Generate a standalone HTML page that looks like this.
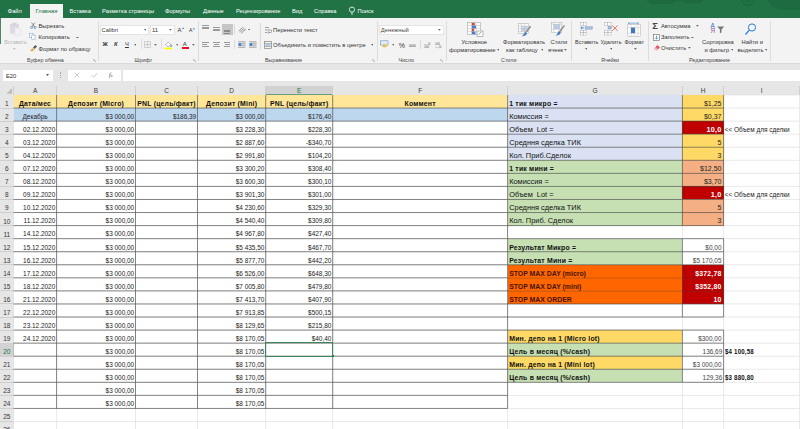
<!DOCTYPE html><html lang="ru"><head><meta charset="utf-8"><title>Excel</title><style>
*{margin:0;padding:0;box-sizing:border-box}
html,body{width:800px;height:429px;overflow:hidden;background:#fff}
body{position:relative;font-family:"Liberation Sans","DejaVu Sans",sans-serif;color:#222}
.a{position:absolute}
.t{position:absolute;white-space:pre;line-height:1;}
.cell{position:absolute;overflow:visible}
.ct{position:absolute;top:0;white-space:pre;line-height:1;}
.b{font-weight:bold}
.ct.b{letter-spacing:0.2px}
.rt{font-size:5.8px;color:#333;margin-top:0.5px;position:absolute;white-space:pre;line-height:1}
.tab{position:absolute;top:8.5px;font-size:5.75px;color:#fff;white-space:pre;line-height:1}
.gl{position:absolute;top:58.1px;font-size:5.4px;color:#444;white-space:pre;line-height:1}
.sep{position:absolute;top:21px;height:40px;width:1px;background:#dcdcdc}
.rh{position:absolute;left:0;width:13.5px;font-size:6.5px;color:#363636;text-align:center;line-height:1}
.ch{position:absolute;top:88.1px;font-size:6.5px;color:#3c3c3c;text-align:center;line-height:1}
</style></head><body>
<div class="a" style="left:0;top:0;width:800px;height:18px;background:#217346"></div>
<svg class="a" style="left:640px;top:0" width="160" height="18" viewBox="0 0 160 18"><g fill="#1d6a40"><path d="M6 0h58l-4 3.5h-14l-3 -2h-8l-2 2.5h-22z"/><path d="M128 0h32v9.5h-18a14 14 0 0 1 -14 -9.5z"/></g><g fill="none" stroke="#1d6a40" stroke-width="1.6"><circle cx="108" cy="-1" r="6.5"/><circle cx="108" cy="-1" r="2.6"/></g></svg>
<div class="a" style="left:30.2px;top:3.8px;width:32.8px;height:14.4px;background:#f3f3f3"></div>
<div class="tab" style="left:7.8px;color:#fff">Файл</div>
<div class="tab" style="left:35.5px;color:#217346">Главная</div>
<div class="tab" style="left:69.5px;color:#fff">Вставка</div>
<div class="tab" style="left:102px;color:#fff">Разметка страницы</div>
<div class="tab" style="left:165px;color:#fff">Формулы</div>
<div class="tab" style="left:203px;color:#fff">Данные</div>
<div class="tab" style="left:236px;color:#fff">Рецензирование</div>
<div class="tab" style="left:292px;color:#fff">Вид</div>
<div class="tab" style="left:314px;color:#fff">Справка</div>
<div class="tab" style="left:357.5px;color:#fff">Поиск</div>
<svg class="a" style="left:348px;top:6px" width="8" height="10" viewBox="0 0 8 10"><circle cx="4" cy="3.6" r="2.6" fill="none" stroke="#fff" stroke-width="0.8"/><path d="M3 7h2M3.2 8.2h1.6" stroke="#fff" stroke-width="0.7"/></svg>
<div class="a" style="left:0;top:18px;width:800px;height:46px;background:#f3f3f3"></div>
<div class="a" style="left:0;top:63px;width:800px;height:1px;background:#dadada"></div>
<div class="a" style="left:0;top:64px;width:800px;height:31px;background:#e6e6e6"></div>
<div class="a" style="left:2.6px;top:69.6px;width:50px;height:11px;background:#fff"></div>
<div class="t" style="left:6px;top:74.1px;font-size:5.8px;color:#333">E20</div>
<svg class="a" style="left:46px;top:74px" width="3" height="1.9" viewBox="0 0 30 19"><path d="M0 0h30L15 19z" fill="#555"/></svg>
<div class="a" style="left:59.6px;top:71.5px;width:1px;height:6px;border-left:1px dotted #aaa"></div>
<div class="a" style="left:67.6px;top:69.6px;width:53.4px;height:11px;background:#fff"></div>
<svg class="a" style="left:74px;top:72px" width="6" height="6" viewBox="0 0 6 6"><path d="M0.6 0.6L5.4 5.4M5.4 0.6L0.6 5.4" stroke="#b4b4b4" stroke-width="0.7" fill="none"/></svg>
<svg class="a" style="left:91px;top:72px" width="7" height="6" viewBox="0 0 7 6"><path d="M0.6 3.2L2.6 5.2L6.4 0.8" stroke="#b4b4b4" stroke-width="0.7" fill="none"/></svg>
<div class="t" style="left:109px;top:71.6px;font-size:6px;color:#444;font-style:italic;font-family:'Liberation Serif',serif">f<span style="font-size:4px">x</span></div>
<div class="a" style="left:123px;top:69.6px;width:677px;height:11px;background:#fff"></div>
<div class="a" style="left:0;top:18px;width:0.7px;height:26px;background:#4d8466"></div>
<div class="sep" style="left:97.6px"></div>
<div class="sep" style="left:198.4px"></div>
<div class="sep" style="left:377px"></div>
<div class="sep" style="left:446px"></div>
<div class="sep" style="left:571px"></div>
<div class="sep" style="left:648px"></div>
<div class="sep" style="left:770px"></div>
<div class="gl" style="left:27px">Буфер обмена</div>
<div class="gl" style="left:134.5px">Шрифт</div>
<div class="gl" style="left:265px">Выравнивание</div>
<div class="gl" style="left:398.5px">Число</div>
<div class="gl" style="left:501px">Стили</div>
<div class="gl" style="left:601px">Ячейки</div>
<div class="gl" style="left:689px">Редактирование</div>
<svg class="a" style="left:92.5px;top:58.5px" width="3" height="3" viewBox="0 0 4 4"><path d="M0.3 2.5V0.3H2.5M1.6 1.6L3.5 3.5M3.6 2.2V3.6H2.2" fill="none" stroke="#888" stroke-width="0.6"/></svg>
<svg class="a" style="left:192.5px;top:58.5px" width="3" height="3" viewBox="0 0 4 4"><path d="M0.3 2.5V0.3H2.5M1.6 1.6L3.5 3.5M3.6 2.2V3.6H2.2" fill="none" stroke="#888" stroke-width="0.6"/></svg>
<svg class="a" style="left:371.5px;top:58.5px" width="3" height="3" viewBox="0 0 4 4"><path d="M0.3 2.5V0.3H2.5M1.6 1.6L3.5 3.5M3.6 2.2V3.6H2.2" fill="none" stroke="#888" stroke-width="0.6"/></svg>
<svg class="a" style="left:439.5px;top:58.5px" width="3" height="3" viewBox="0 0 4 4"><path d="M0.3 2.5V0.3H2.5M1.6 1.6L3.5 3.5M3.6 2.2V3.6H2.2" fill="none" stroke="#888" stroke-width="0.6"/></svg>
<svg class="a" style="left:8.5px;top:22.3px" width="13.4" height="14.4" viewBox="0 0 14 18" preserveAspectRatio="none"><rect x="1" y="2.5" width="9.5" height="12" fill="#dedae1" /><rect x="3.5" y="1" width="4.5" height="3" fill="#d6d1da"/><path d="M6 7.5h4.2l2.3 2.3V16.5H6z" fill="#f3f1f5" stroke="#dbd7de" stroke-width="0.5"/></svg>
<div class="rt" style="left:4.2px;top:39.8px;color:#b2b2b2;font-size:5.3px">Вставить</div>
<svg class="a" style="left:13.2px;top:48.2px" width="2.8" height="1.8" viewBox="0 0 28 18"><path d="M0 0h28L14 18z" fill="#bcbcbc"/></svg>
<svg class="a" style="left:29.5px;top:22px" width="7" height="7" viewBox="0 0 7 7"><path d="M1.5 0.5L4.5 4.5M5 0.5L2 4.5" stroke="#555" stroke-width="0.6" fill="none"/><circle cx="1.6" cy="5.4" r="1.1" fill="none" stroke="#2b6cb5" stroke-width="0.6"/><circle cx="5" cy="5.4" r="1.1" fill="none" stroke="#2b6cb5" stroke-width="0.6"/></svg>
<div class="rt" style="left:38.5px;top:23.8px">Вырезать</div>
<svg class="a" style="left:29.3px;top:33.4px" width="7.2" height="6.6" viewBox="0 0 8 8"><rect x="0.5" y="0.5" width="4" height="5" fill="#fff" stroke="#7b9cc6" stroke-width="0.6"/><rect x="3" y="2.5" width="4" height="5" fill="#fff" stroke="#7b9cc6" stroke-width="0.6"/></svg>
<div class="rt" style="left:38.5px;top:34.2px">Копировать</div>
<svg class="a" style="left:76.1px;top:36.5px" width="2.8" height="1.8" viewBox="0 0 28 18"><path d="M0 0h28L14 18z" fill="#666"/></svg>
<svg class="a" style="left:29px;top:44px" width="9" height="8" viewBox="0 0 9 8"><path d="M1 6.5L3.5 4L5.5 6L3 7.5z" fill="#e8b24a"/><path d="M4 3.5L6.5 1L8 2.5L5.5 5z" fill="#555"/></svg>
<div class="rt" style="left:38.5px;top:46.2px">Формат по образцу</div>
<div class="a" style="left:99.9px;top:24.7px;width:49.5px;height:10px;background:#fff;border:0.5px solid #e4e4e4"></div>
<div class="rt" style="left:101.6px;top:27.1px">Calibri</div>
<svg class="a" style="left:143.6px;top:28.9px" width="2.8" height="1.8" viewBox="0 0 28 18"><path d="M0 0h28L14 18z" fill="#666"/></svg>
<div class="a" style="left:150px;top:24.7px;width:24.7px;height:10px;background:#fff;border:0.5px solid #e4e4e4"></div>
<div class="rt" style="left:152px;top:27.1px">11</div>
<svg class="a" style="left:169.3px;top:28.9px" width="2.8" height="1.8" viewBox="0 0 28 18"><path d="M0 0h28L14 18z" fill="#666"/></svg>
<div class="rt" style="left:177.5px;top:26.2px;font-size:6px">A<span style="font-size:3px;vertical-align:top;color:#2b6cb5">▲</span></div>
<div class="rt" style="left:189px;top:27px;font-size:5px">A<span style="font-size:3px;vertical-align:top;color:#2b6cb5">▼</span></div>
<div class="rt b" style="left:102.5px;top:41.9px;color:#333">Ж</div>
<div class="rt b" style="left:114px;top:41.9px;font-style:italic;color:#333">К</div>
<div class="rt" style="left:125px;top:41.9px;text-decoration:underline;color:#333">Ч</div>
<svg class="a" style="left:133.6px;top:43.9px" width="2.8" height="1.8" viewBox="0 0 28 18"><path d="M0 0h28L14 18z" fill="#666"/></svg>
<div class="a" style="left:140.5px;top:39px;width:1px;height:10px;background:#dcdcdc"></div>
<svg class="a" style="left:144px;top:41px" width="7" height="7" viewBox="0 0 7 7"><path d="M0.5 0.5h6v6h-6zM3.5 0.5v6M0.5 3.5h6" fill="none" stroke="#adadad" stroke-width="0.5"/></svg>
<svg class="a" style="left:154.1px;top:43.9px" width="2.8" height="1.8" viewBox="0 0 28 18"><path d="M0 0h28L14 18z" fill="#666"/></svg>
<div class="a" style="left:160.5px;top:39px;width:1px;height:10px;background:#dcdcdc"></div>
<svg class="a" style="left:164px;top:39.5px" width="9" height="10" viewBox="0 0 9 10"><path d="M1.6 4.6L4.2 2L6.8 4.6L4.2 6.8z" fill="#fff" stroke="#8a8a8a" stroke-width="0.6"/><path d="M7.2 4.2c0.7 1 0.9 1.5 0.9 1.9a0.9 0.9 0 0 1 -1.8 0c0 -0.4 0.2 -0.9 0.9 -1.9z" fill="#5b9bd5"/><rect x="0.5" y="7.6" width="7.5" height="1.8" fill="#ffff00"/></svg>
<svg class="a" style="left:175.6px;top:43.9px" width="2.8" height="1.8" viewBox="0 0 28 18"><path d="M0 0h28L14 18z" fill="#666"/></svg>
<div class="rt" style="left:182.8px;top:40.6px;font-size:6px;color:#333">A</div>
<div class="a" style="left:181.5px;top:47.4px;width:7.5px;height:1.8px;background:#e81123"></div>
<svg class="a" style="left:192.1px;top:43.9px" width="2.8" height="1.8" viewBox="0 0 28 18"><path d="M0 0h28L14 18z" fill="#666"/></svg>
<div class="a" style="left:221.9px;top:24px;width:10.9px;height:10.8px;background:#c6c6c6"></div>
<div class="a" style="left:202px;top:25.3px;width:6.8px;height:0.9px;background:#9a9a9a"></div>
<div class="a" style="left:202px;top:26.8px;width:6.8px;height:0.9px;background:#9a9a9a"></div>
<div class="a" style="left:202px;top:28.3px;width:6.8px;height:0.9px;background:#9a9a9a"></div>
<div class="a" style="left:212.8px;top:27.2px;width:6.9px;height:0.9px;background:#9a9a9a"></div>
<div class="a" style="left:212.8px;top:28.7px;width:6.9px;height:0.9px;background:#9a9a9a"></div>
<div class="a" style="left:212.8px;top:30.2px;width:6.9px;height:0.9px;background:#9a9a9a"></div>
<div class="a" style="left:224.2px;top:29.6px;width:6.2px;height:0.9px;background:#8a8a8a"></div>
<div class="a" style="left:224.2px;top:31.1px;width:6.2px;height:0.9px;background:#8a8a8a"></div>
<div class="a" style="left:224.2px;top:32.6px;width:6.2px;height:0.9px;background:#8a8a8a"></div>
<div class="a" style="left:234.4px;top:24.2px;width:0.8px;height:10.2px;background:#dadada"></div>
<div class="a" style="left:234.4px;top:39.7px;width:0.8px;height:9.7px;background:#dadada"></div>
<div class="a" style="left:202px;top:41.9px;width:6.8px;height:0.9px;background:#9a9a9a"></div>
<div class="a" style="left:212.85000000000002px;top:41.9px;width:6.8px;height:0.9px;background:#9a9a9a"></div>
<div class="a" style="left:223.6px;top:41.9px;width:6.8px;height:0.9px;background:#9a9a9a"></div>
<div class="a" style="left:202px;top:43.9px;width:5px;height:0.9px;background:#9a9a9a"></div>
<div class="a" style="left:213.75px;top:43.9px;width:5px;height:0.9px;background:#9a9a9a"></div>
<div class="a" style="left:225.4px;top:43.9px;width:5px;height:0.9px;background:#9a9a9a"></div>
<div class="a" style="left:202px;top:45.9px;width:6.8px;height:0.9px;background:#9a9a9a"></div>
<div class="a" style="left:212.85000000000002px;top:45.9px;width:6.8px;height:0.9px;background:#9a9a9a"></div>
<div class="a" style="left:223.6px;top:45.9px;width:6.8px;height:0.9px;background:#9a9a9a"></div>
<svg class="a" style="left:238px;top:25.5px" width="9" height="8" viewBox="0 0 9 8"><path d="M0.8 5.2L4.5 1.5M2 6.4L5.7 2.7M3.2 7.4L7.5 3.1" stroke="#777" stroke-width="0.8" fill="none"/><path d="M4.2 0.8l3.6 3.6" stroke="#999" stroke-width="0.6"/></svg>
<svg class="a" style="left:247.7px;top:28.7px" width="2.8" height="1.8" viewBox="0 0 28 18"><path d="M0 0h28L14 18z" fill="#666"/></svg>
<svg class="a" style="left:238.3px;top:41px" width="8" height="7" viewBox="0 0 8 7"><rect x="0" y="0.8" width="7.5" height="5.6" fill="#d8d8d8"/><g stroke="#999" stroke-width="0.6"><path d="M0 0.5h7.5M0 6.5h7.5M3.6 2.4h3.9M3.6 4.4h3.9"/></g><path d="M0.6 2.2h2.6v2.6h-2.6z" fill="#2b7cd3"/></svg>
<svg class="a" style="left:249px;top:41px" width="8" height="7" viewBox="0 0 8 7"><rect x="0" y="0.8" width="7.5" height="5.6" fill="#d8d8d8"/><g stroke="#999" stroke-width="0.6"><path d="M0 0.5h7.5M0 6.5h7.5M3.6 2.4h3.9M3.6 4.4h3.9"/></g><path d="M0.6 2.2h2.6v2.6h-2.6z" fill="#2b7cd3"/></svg>
<div class="a" style="left:259.8px;top:23.3px;width:0.9px;height:27px;background:#dadada"></div>
<svg class="a" style="left:264px;top:26px" width="8" height="8" viewBox="0 0 8 8"><path d="M1 1.5h4M1 4h5.5a1 1 0 0 1 0 2.5h-2M1 6.5h2" stroke="#666" stroke-width="0.6" fill="none"/><path d="M5 5.3L3.8 6.5L5 7.7" stroke="#2b7cd3" stroke-width="0.6" fill="none"/></svg>
<div class="rt" style="left:273px;top:27.4px">Перенести текст</div>
<svg class="a" style="left:264px;top:41px" width="8" height="8" viewBox="0 0 8 8"><rect x="0.5" y="0.5" width="7" height="7" fill="none" stroke="#777" stroke-width="0.6"/><path d="M0.5 2.5h7M0.5 5.5h7" stroke="#777" stroke-width="0.5"/><path d="M1.5 4h5" stroke="#2b7cd3" stroke-width="0.7"/></svg>
<div class="rt" style="left:273px;top:42.6px">Объединить и поместить в центре</div>
<svg class="a" style="left:370.6px;top:44.3px" width="2.8" height="1.8" viewBox="0 0 28 18"><path d="M0 0h28L14 18z" fill="#666"/></svg>
<div class="a" style="left:379.4px;top:24.7px;width:64.2px;height:10px;background:#fff;border:0.5px solid #e4e4e4"></div>
<div class="rt" style="left:380.8px;top:27.1px;color:#4a4a4a">Денежный</div>
<svg class="a" style="left:438.1px;top:28.9px" width="2.8" height="1.8" viewBox="0 0 28 18"><path d="M0 0h28L14 18z" fill="#666"/></svg>
<svg class="a" style="left:380px;top:40px" width="9" height="8" viewBox="0 0 9 8"><rect x="0.5" y="0.8" width="7.5" height="4.2" fill="#e4ecf5" stroke="#6f94bf" stroke-width="0.6"/><ellipse cx="4.6" cy="6" rx="2.4" ry="1.3" fill="#eab54f"/><ellipse cx="6.2" cy="5" rx="1.6" ry="1" fill="#f2cf7e"/></svg>
<svg class="a" style="left:391.6px;top:43.9px" width="2.8" height="1.8" viewBox="0 0 28 18"><path d="M0 0h28L14 18z" fill="#666"/></svg>
<div class="rt" style="left:398.8px;top:41px;font-size:7px">%</div>
<div class="rt" style="left:409px;top:43px;font-size:4px">000</div>
<div class="rt" style="left:423.5px;top:42.2px;font-size:3.8px;line-height:0.85;color:#555">←,0<br>,00</div>
<div class="rt" style="left:434.5px;top:42.2px;font-size:3.8px;line-height:0.85;color:#555">,00<br>→,0</div>
<div class="a" style="left:419.8px;top:39.7px;width:0.8px;height:9.7px;background:#dadada"></div>
<svg class="a" style="left:466.5px;top:21.5px" width="17" height="15" viewBox="0 0 17 15"><rect x="0.5" y="0.5" width="13" height="12" fill="#fff" stroke="#999" stroke-width="0.5"/><path d="M0.5 3.5h13M0.5 6.5h13M0.5 9.5h13M4.8 0.5v12M9.2 0.5v12" stroke="#aaa" stroke-width="0.4"/><rect x="4.8" y="0.8" width="3" height="2.6" fill="#d24a3b"/><rect x="4.8" y="3.6" width="4.2" height="2.8" fill="#4a7fc1"/><rect x="4.8" y="6.6" width="2.4" height="2.8" fill="#d24a3b"/><rect x="4.8" y="9.6" width="3.6" height="2.6" fill="#4a7fc1"/><rect x="10" y="9" width="6" height="5.5" fill="#fff" stroke="#777" stroke-width="0.5"/><path d="M11.5 12.8l3-3" stroke="#555" stroke-width="0.6"/></svg>
<div class="rt" style="left:461.5px;top:39.6px">Условное</div>
<div class="rt" style="left:449px;top:47.4px">форматирование</div>
<svg class="a" style="left:496.6px;top:49.1px" width="2.8" height="1.8" viewBox="0 0 28 18"><path d="M0 0h28L14 18z" fill="#666"/></svg>
<svg class="a" style="left:517.6px;top:22.6px" width="14" height="14" viewBox="0 0 14 14"><rect x="0.4" y="0.6" width="9.8" height="10" fill="#fff" stroke="#a8a8a8" stroke-width="0.5"/><rect x="3.4" y="3.2" width="6.6" height="5.2" fill="#c9d9ec"/><path d="M0.4 3.2h9.8M0.4 5.8h9.8M0.4 8.4h9.8M3.4 0.6v10M6.8 0.6v10" stroke="#a8a8a8" stroke-width="0.4"/><path d="M12.6 3.2L7.8 9.6" stroke="#8c8c8c" stroke-width="1.5"/><path d="M3.6 13.2c2.2 0.4 4.6 -0.6 5.4 -2.6l-2.2 -1.8c-0.6 2 -1.6 3.6 -3.2 4.4z" fill="#3f7fc4"/></svg>
<div class="rt" style="left:503px;top:39.6px">Форматировать</div>
<div class="rt" style="left:506px;top:47.4px">как таблицу</div>
<svg class="a" style="left:540.6px;top:49.1px" width="2.8" height="1.8" viewBox="0 0 28 18"><path d="M0 0h28L14 18z" fill="#666"/></svg>
<svg class="a" style="left:551.4px;top:22.2px" width="15" height="14" viewBox="0 0 15 14"><rect x="0.4" y="0.6" width="10.4" height="9.6" fill="#fff" stroke="#a8a8a8" stroke-width="0.5"/><rect x="2.6" y="2.2" width="6.2" height="5" fill="#b9cde6"/><path d="M0.4 2.2h10.4M0.4 7.2h10.4M2.6 0.6v9.6M8.8 0.6v9.6" stroke="#b0b0b0" stroke-width="0.4"/><path d="M13.4 3.4L8.6 9.8" stroke="#8c8c8c" stroke-width="1.5"/><path d="M4.4 13.4c2.2 0.4 4.6 -0.6 5.4 -2.6l-2.2 -1.8c-0.6 2 -1.6 3.6 -3.2 4.4z" fill="#3f7fc4"/></svg>
<div class="rt" style="left:550.5px;top:39.6px">Стили</div>
<div class="rt" style="left:548px;top:47.4px">ячеек</div>
<svg class="a" style="left:564.1px;top:49.1px" width="2.8" height="1.8" viewBox="0 0 28 18"><path d="M0 0h28L14 18z" fill="#666"/></svg>
<svg class="a" style="left:579.5px;top:21.5px" width="14" height="14" viewBox="0 0 14 14"><g fill="#fff" stroke="#a6a6a6" stroke-width="0.45"><rect x="0.6" y="0.6" width="3" height="2.6"/><rect x="3.6" y="0.6" width="3" height="2.6"/><rect x="0.6" y="8.4" width="3" height="2.3"/><rect x="3.6" y="8.4" width="3" height="2.3"/><rect x="0.6" y="10.7" width="3" height="2.3"/><rect x="3.6" y="10.7" width="3" height="2.3"/></g><rect x="5.6" y="4.6" width="6.8" height="2.6" fill="#9db4d0" stroke="#7f9cc0" stroke-width="0.4"/><path d="M8 4.6v2.6M10.2 4.6v2.6" stroke="#fff" stroke-width="0.4"/><path d="M4.4 5.9H0.9M2.3 4.5L0.8 5.9L2.3 7.3" stroke="#2b7cd3" stroke-width="0.8" fill="none"/></svg>
<div class="rt" style="left:575px;top:39.6px;font-size:5.5px">Вставить</div>
<svg class="a" style="left:584.6px;top:48.3px" width="2.8" height="1.8" viewBox="0 0 28 18"><path d="M0 0h28L14 18z" fill="#666"/></svg>
<svg class="a" style="left:603.5px;top:21.5px" width="15" height="14" viewBox="0 0 15 14"><g fill="#fff" stroke="#a6a6a6" stroke-width="0.45"><rect x="0.6" y="0.6" width="3.2" height="2.6"/><rect x="3.8" y="0.6" width="3.2" height="2.6"/><rect x="0.6" y="8.2" width="3.4" height="2.4"/><rect x="4" y="8.2" width="3.4" height="2.4"/><rect x="0.6" y="10.6" width="3.4" height="2.4"/><rect x="4" y="10.6" width="3.4" height="2.4"/></g><rect x="4" y="4.4" width="3.4" height="2.6" fill="#9db4d0" stroke="#7f9cc0" stroke-width="0.4"/><path d="M8.2 3.6l5.4 5.2M13.6 3.6l-5.4 5.2" stroke="#d8503f" stroke-width="0.8"/></svg>
<div class="rt" style="left:600.5px;top:39.6px;font-size:5.5px">Удалить</div>
<svg class="a" style="left:609.6px;top:48.3px" width="2.8" height="1.8" viewBox="0 0 28 18"><path d="M0 0h28L14 18z" fill="#666"/></svg>
<svg class="a" style="left:627px;top:21.5px" width="15" height="15" viewBox="0 0 15 15"><rect x="0.8" y="2.6" width="12.8" height="11.6" fill="#fff" stroke="#a6a6a6" stroke-width="0.45"/><path d="M0.8 5.6h12.8M0.8 11.2h12.8M4 2.6v11.6M8 2.6v11.6M11 2.6v11.6" stroke="#b4b4b4" stroke-width="0.4"/><rect x="4" y="5.6" width="4" height="5.6" fill="#3d78bd"/><path d="M1.2 1.2h10.4M2.4 0.3L1.2 1.2L2.4 2.1M10.4 0.3L11.6 1.2L10.4 2.1" stroke="#4a86c8" stroke-width="0.6" fill="none"/></svg>
<div class="rt" style="left:624.5px;top:39.6px;font-size:5.5px">Формат</div>
<svg class="a" style="left:634.1px;top:48.3px" width="2.8" height="1.8" viewBox="0 0 28 18"><path d="M0 0h28L14 18z" fill="#666"/></svg>
<div class="rt b" style="left:652.2px;top:20.6px;font-size:9.4px;color:#444">Σ</div>
<div class="rt" style="left:661px;top:23.8px">Автосумма</div>
<svg class="a" style="left:696.1px;top:25.3px" width="2.8" height="1.8" viewBox="0 0 28 18"><path d="M0 0h28L14 18z" fill="#666"/></svg>
<svg class="a" style="left:653px;top:33.5px" width="7" height="7" viewBox="0 0 7 7"><rect x="0.5" y="0.5" width="6" height="6" fill="#fff" stroke="#666" stroke-width="0.6"/><path d="M3.5 1.5v3.5M2 3.6L3.5 5.2L5 3.6" stroke="#2b7cd3" stroke-width="0.7" fill="none"/></svg>
<div class="rt" style="left:661px;top:34.2px">Заполнить</div>
<svg class="a" style="left:691.1px;top:36.5px" width="2.8" height="1.8" viewBox="0 0 28 18"><path d="M0 0h28L14 18z" fill="#666"/></svg>
<svg class="a" style="left:652.5px;top:44px" width="8" height="7" viewBox="0 0 8 7"><path d="M1 4.5L4.5 1L7 3.5L3.5 6.5z" fill="#e0566b"/><path d="M1 4.5L2.5 3L5 5.5L3.5 6.5z" fill="#f3c0c8"/></svg>
<div class="rt" style="left:661px;top:45.8px">Очистить</div>
<svg class="a" style="left:688.1px;top:47.3px" width="2.8" height="1.8" viewBox="0 0 28 18"><path d="M0 0h28L14 18z" fill="#666"/></svg>
<svg class="a" style="left:710px;top:21.5px" width="16" height="15" viewBox="0 0 16 15"><path d="M7.2 4.4h7l-2.7 3v3l-1.6 0.8v-3.8z" fill="#777"/></svg>
<div class="rt" style="left:710.5px;top:22.2px;font-size:6.3px;color:#2b6cb5;line-height:0.92">А<br><span style="color:#9b4fa5">Я</span></div>
<div class="rt" style="left:702px;top:39.6px">Сортировка</div>
<div class="rt" style="left:704.5px;top:47.4px">и фильтр</div>
<svg class="a" style="left:730.6px;top:49.1px" width="2.8" height="1.8" viewBox="0 0 28 18"><path d="M0 0h28L14 18z" fill="#666"/></svg>
<svg class="a" style="left:744px;top:21.5px" width="14" height="15" viewBox="0 0 14 15"><circle cx="8" cy="5.5" r="3.6" fill="none" stroke="#2b7cd3" stroke-width="1"/><path d="M5.3 8.2L1.5 12.5" stroke="#2b7cd3" stroke-width="1.2"/></svg>
<div class="rt" style="left:741.5px;top:39.6px">Найти и</div>
<div class="rt" style="left:737.5px;top:47.4px">выделить</div>
<svg class="a" style="left:764.6px;top:49.1px" width="2.8" height="1.8" viewBox="0 0 28 18"><path d="M0 0h28L14 18z" fill="#666"/></svg>
<svg class="a" style="left:6px;top:88px" width="6.4" height="6" viewBox="0 0 6 6"><path d="M5.8 0.2V5.8H0.2z" fill="#bdbdbd"/></svg>
<div class="ch" style="left:13.5px;width:43.1px;">A</div>
<div class="a" style="left:56.1px;top:86px;width:1px;height:9px;background:#cfcfcf"></div>
<div class="ch" style="left:56.6px;width:78.9px;">B</div>
<div class="a" style="left:135.0px;top:86px;width:1px;height:9px;background:#cfcfcf"></div>
<div class="ch" style="left:135.5px;width:62.0px;">C</div>
<div class="a" style="left:197.0px;top:86px;width:1px;height:9px;background:#cfcfcf"></div>
<div class="ch" style="left:197.5px;width:68.19999999999999px;">D</div>
<div class="a" style="left:265.2px;top:86px;width:1px;height:9px;background:#cfcfcf"></div>
<div class="a" style="left:265.7px;top:86px;width:67.0px;height:9.4px;background:#d2d2d2;border-bottom:1px solid #217346"></div>
<div class="ch" style="left:265.7px;width:67.0px;color:#217346;">E</div>
<div class="a" style="left:332.2px;top:86px;width:1px;height:9px;background:#cfcfcf"></div>
<div class="ch" style="left:332.7px;width:174.90000000000003px;">F</div>
<div class="a" style="left:507.1px;top:86px;width:1px;height:9px;background:#cfcfcf"></div>
<div class="ch" style="left:507.6px;width:174.79999999999995px;">G</div>
<div class="a" style="left:681.9px;top:86px;width:1px;height:9px;background:#cfcfcf"></div>
<div class="ch" style="left:682.4px;width:41.200000000000045px;">H</div>
<div class="a" style="left:723.1px;top:86px;width:1px;height:9px;background:#cfcfcf"></div>
<div class="ch" style="left:723.6px;width:76.0px;">I</div>
<div class="a" style="left:799.1px;top:86px;width:1px;height:9px;background:#cfcfcf"></div>
<div class="a" style="left:13px;top:86px;width:1px;height:9px;background:#cfcfcf"></div>
<div class="a" style="left:0;top:95.0px;width:13.5px;height:334.0px;background:#e6e6e6"></div>
<div class="rh" style="top:101.1px;">1</div>
<div class="a" style="left:0;top:107.56px;width:13.5px;height:1px;background:#cfcfcf"></div>
<div class="rh" style="top:114.1px;">2</div>
<div class="a" style="left:0;top:120.62px;width:13.5px;height:1px;background:#cfcfcf"></div>
<div class="rh" style="top:127.1px;">3</div>
<div class="a" style="left:0;top:133.68px;width:13.5px;height:1px;background:#cfcfcf"></div>
<div class="rh" style="top:140.1px;">4</div>
<div class="a" style="left:0;top:146.74px;width:13.5px;height:1px;background:#cfcfcf"></div>
<div class="rh" style="top:153.1px;">5</div>
<div class="a" style="left:0;top:159.8px;width:13.5px;height:1px;background:#cfcfcf"></div>
<div class="rh" style="top:166.1px;">6</div>
<div class="a" style="left:0;top:172.86px;width:13.5px;height:1px;background:#cfcfcf"></div>
<div class="rh" style="top:179.1px;">7</div>
<div class="a" style="left:0;top:185.92000000000002px;width:13.5px;height:1px;background:#cfcfcf"></div>
<div class="rh" style="top:192.1px;">8</div>
<div class="a" style="left:0;top:198.98000000000002px;width:13.5px;height:1px;background:#cfcfcf"></div>
<div class="rh" style="top:205.1px;">9</div>
<div class="a" style="left:0;top:212.04000000000002px;width:13.5px;height:1px;background:#cfcfcf"></div>
<div class="rh" style="top:219.1px;">10</div>
<div class="a" style="left:0;top:225.1px;width:13.5px;height:1px;background:#cfcfcf"></div>
<div class="rh" style="top:232.1px;">11</div>
<div class="a" style="left:0;top:238.16px;width:13.5px;height:1px;background:#cfcfcf"></div>
<div class="rh" style="top:245.1px;">12</div>
<div class="a" style="left:0;top:251.22px;width:13.5px;height:1px;background:#cfcfcf"></div>
<div class="rh" style="top:258.1px;">13</div>
<div class="a" style="left:0;top:264.28px;width:13.5px;height:1px;background:#cfcfcf"></div>
<div class="rh" style="top:271.1px;">14</div>
<div class="a" style="left:0;top:277.34000000000003px;width:13.5px;height:1px;background:#cfcfcf"></div>
<div class="rh" style="top:284.1px;">15</div>
<div class="a" style="left:0;top:290.4px;width:13.5px;height:1px;background:#cfcfcf"></div>
<div class="rh" style="top:297.1px;">16</div>
<div class="a" style="left:0;top:303.46000000000004px;width:13.5px;height:1px;background:#cfcfcf"></div>
<div class="rh" style="top:310.1px;">17</div>
<div class="a" style="left:0;top:316.52px;width:13.5px;height:1px;background:#cfcfcf"></div>
<div class="rh" style="top:323.1px;">18</div>
<div class="a" style="left:0;top:329.58000000000004px;width:13.5px;height:1px;background:#cfcfcf"></div>
<div class="rh" style="top:336.1px;">19</div>
<div class="a" style="left:0;top:342.64px;width:13.5px;height:1px;background:#cfcfcf"></div>
<div class="a" style="left:0;top:343.14px;width:13.5px;height:13.06px;background:#d2d2d2;border-right:1px solid #217346"></div>
<div class="rh" style="top:349.1px;color:#217346;">20</div>
<div class="a" style="left:0;top:355.7px;width:13.5px;height:1px;background:#cfcfcf"></div>
<div class="rh" style="top:362.1px;">21</div>
<div class="a" style="left:0;top:368.76px;width:13.5px;height:1px;background:#cfcfcf"></div>
<div class="rh" style="top:375.1px;">22</div>
<div class="a" style="left:0;top:381.82px;width:13.5px;height:1px;background:#cfcfcf"></div>
<div class="rh" style="top:388.1px;">23</div>
<div class="a" style="left:0;top:394.88px;width:13.5px;height:1px;background:#cfcfcf"></div>
<div class="rh" style="top:401.1px;">24</div>
<div class="a" style="left:0;top:407.94px;width:13.5px;height:1px;background:#cfcfcf"></div>
<div class="rh" style="top:414.1px;">25</div>
<div class="a" style="left:0;top:421.0px;width:13.5px;height:1px;background:#cfcfcf"></div>
<div class="rh" style="top:427.1px;">26</div>
<div class="a" style="left:0;top:434.06px;width:13.5px;height:1px;background:#cfcfcf"></div>
<svg class="a" style="left:0;top:0" width="800" height="429" viewBox="0 0 800 429"><g stroke="#e1e1e1" stroke-width="0.75" fill="none"><path d="M13.5 95.0H800"/><path d="M13.5 108.06H800"/><path d="M13.5 121.12H800"/><path d="M13.5 134.18H800"/><path d="M13.5 147.24H800"/><path d="M13.5 160.3H800"/><path d="M13.5 173.36H800"/><path d="M13.5 186.42000000000002H800"/><path d="M13.5 199.48000000000002H800"/><path d="M13.5 212.54000000000002H800"/><path d="M13.5 225.6H800"/><path d="M13.5 238.66H800"/><path d="M13.5 251.72H800"/><path d="M13.5 264.78H800"/><path d="M13.5 277.84000000000003H800"/><path d="M13.5 290.9H800"/><path d="M13.5 303.96000000000004H800"/><path d="M13.5 317.02H800"/><path d="M13.5 330.08000000000004H800"/><path d="M13.5 343.14H800"/><path d="M13.5 356.2H800"/><path d="M13.5 369.26H800"/><path d="M13.5 382.32H800"/><path d="M13.5 395.38H800"/><path d="M13.5 408.44H800"/><path d="M13.5 421.5H800"/><path d="M13.5 434.56H800"/><path d="M13.5 95.0V429"/><path d="M56.6 95.0V429"/><path d="M135.5 95.0V429"/><path d="M197.5 95.0V429"/><path d="M265.7 95.0V429"/><path d="M332.7 95.0V429"/><path d="M507.6 95.0V429"/><path d="M682.4 95.0V429"/><path d="M723.6 95.0V429"/><path d="M799.6 95.0V429"/></g></svg>
<div class="a" style="left:13.5px;top:95.0px;width:43.1px;height:13.060000000000002px;background:#ffe699"></div>
<div class="a" style="left:56.6px;top:95.0px;width:78.9px;height:13.060000000000002px;background:#ffe699"></div>
<div class="a" style="left:135.5px;top:95.0px;width:62.0px;height:13.060000000000002px;background:#ffe699"></div>
<div class="a" style="left:197.5px;top:95.0px;width:68.19999999999999px;height:13.060000000000002px;background:#ffe699"></div>
<div class="a" style="left:265.7px;top:95.0px;width:67.0px;height:13.060000000000002px;background:#ffe699"></div>
<div class="a" style="left:332.7px;top:95.0px;width:174.90000000000003px;height:13.060000000000002px;background:#ffe699"></div>
<div class="a" style="left:13.5px;top:108.06px;width:43.1px;height:13.060000000000002px;background:#bdd7ee"></div>
<div class="a" style="left:56.6px;top:108.06px;width:78.9px;height:13.060000000000002px;background:#bdd7ee"></div>
<div class="a" style="left:135.5px;top:108.06px;width:62.0px;height:13.060000000000002px;background:#bdd7ee"></div>
<div class="a" style="left:197.5px;top:108.06px;width:68.19999999999999px;height:13.060000000000002px;background:#bdd7ee"></div>
<div class="a" style="left:265.7px;top:108.06px;width:67.0px;height:13.060000000000002px;background:#bdd7ee"></div>
<div class="a" style="left:332.7px;top:108.06px;width:174.90000000000003px;height:13.060000000000002px;background:#bdd7ee"></div>
<div class="a" style="left:507.6px;top:95.0px;width:174.79999999999995px;height:13.060000000000002px;background:#d9e1f2"></div>
<div class="a" style="left:507.6px;top:108.06px;width:174.79999999999995px;height:13.060000000000002px;background:#d9e1f2"></div>
<div class="a" style="left:507.6px;top:121.12px;width:174.79999999999995px;height:13.060000000000002px;background:#d9e1f2"></div>
<div class="a" style="left:507.6px;top:134.18px;width:174.79999999999995px;height:13.060000000000002px;background:#d9e1f2"></div>
<div class="a" style="left:507.6px;top:147.24px;width:174.79999999999995px;height:13.060000000000002px;background:#d9e1f2"></div>
<div class="a" style="left:507.6px;top:160.3px;width:174.79999999999995px;height:13.060000000000002px;background:#c6e0b4"></div>
<div class="a" style="left:507.6px;top:173.36px;width:174.79999999999995px;height:13.060000000000002px;background:#c6e0b4"></div>
<div class="a" style="left:507.6px;top:186.42000000000002px;width:174.79999999999995px;height:13.060000000000002px;background:#c6e0b4"></div>
<div class="a" style="left:507.6px;top:199.48000000000002px;width:174.79999999999995px;height:13.060000000000002px;background:#c6e0b4"></div>
<div class="a" style="left:507.6px;top:212.54000000000002px;width:174.79999999999995px;height:13.059999999999974px;background:#c6e0b4"></div>
<div class="a" style="left:507.6px;top:238.66px;width:174.79999999999995px;height:13.060000000000002px;background:#c6e0b4"></div>
<div class="a" style="left:507.6px;top:251.72px;width:174.79999999999995px;height:13.059999999999974px;background:#c6e0b4"></div>
<div class="a" style="left:507.6px;top:264.78px;width:174.79999999999995px;height:13.06000000000006px;background:#ff6600"></div>
<div class="a" style="left:507.6px;top:277.84000000000003px;width:174.79999999999995px;height:13.059999999999945px;background:#ff6600"></div>
<div class="a" style="left:507.6px;top:290.9px;width:174.79999999999995px;height:13.06000000000006px;background:#ff6600"></div>
<div class="a" style="left:507.6px;top:330.08000000000004px;width:174.79999999999995px;height:13.059999999999945px;background:#ffd966"></div>
<div class="a" style="left:507.6px;top:343.14px;width:174.79999999999995px;height:13.060000000000002px;background:#c6e0b4"></div>
<div class="a" style="left:507.6px;top:356.2px;width:174.79999999999995px;height:13.060000000000002px;background:#ffd966"></div>
<div class="a" style="left:507.6px;top:369.26px;width:174.79999999999995px;height:13.060000000000002px;background:#c6e0b4"></div>
<div class="a" style="left:682.4px;top:95.0px;width:41.200000000000045px;height:13.060000000000002px;background:#ffd966"></div>
<div class="a" style="left:682.4px;top:108.06px;width:41.200000000000045px;height:13.060000000000002px;background:#ffd966"></div>
<div class="a" style="left:682.4px;top:121.12px;width:41.200000000000045px;height:13.060000000000002px;background:#c00000"></div>
<div class="a" style="left:682.4px;top:134.18px;width:41.200000000000045px;height:13.060000000000002px;background:#ffd966"></div>
<div class="a" style="left:682.4px;top:147.24px;width:41.200000000000045px;height:13.060000000000002px;background:#ffd966"></div>
<div class="a" style="left:682.4px;top:160.3px;width:41.200000000000045px;height:13.060000000000002px;background:#f4b084"></div>
<div class="a" style="left:682.4px;top:173.36px;width:41.200000000000045px;height:13.060000000000002px;background:#f4b084"></div>
<div class="a" style="left:682.4px;top:186.42000000000002px;width:41.200000000000045px;height:13.060000000000002px;background:#c00000"></div>
<div class="a" style="left:682.4px;top:199.48000000000002px;width:41.200000000000045px;height:13.060000000000002px;background:#f4b084"></div>
<div class="a" style="left:682.4px;top:212.54000000000002px;width:41.200000000000045px;height:13.059999999999974px;background:#f4b084"></div>
<div class="a" style="left:682.4px;top:264.78px;width:41.200000000000045px;height:13.06000000000006px;background:#c00000"></div>
<div class="a" style="left:682.4px;top:277.84000000000003px;width:41.200000000000045px;height:13.059999999999945px;background:#c00000"></div>
<div class="a" style="left:682.4px;top:290.9px;width:41.200000000000045px;height:13.06000000000006px;background:#c00000"></div>
<svg class="a" style="left:0;top:0" width="800" height="429" viewBox="0 0 800 429"><path d="M13.5 108.06H56.6M56.6 108.06H135.5M135.5 108.06H197.5M197.5 108.06H265.7M265.7 108.06H332.7M332.7 108.06H507.6M507.6 108.06H682.4M682.4 108.06H723.6M13.5 121.12H56.6M56.6 121.12H135.5M135.5 121.12H197.5M197.5 121.12H265.7M265.7 121.12H332.7M332.7 121.12H507.6M507.6 121.12H682.4M682.4 121.12H723.6M13.5 134.18H56.6M56.6 134.18H135.5M135.5 134.18H197.5M197.5 134.18H265.7M265.7 134.18H332.7M332.7 134.18H507.6M507.6 134.18H682.4M682.4 134.18H723.6M13.5 147.24H56.6M56.6 147.24H135.5M135.5 147.24H197.5M197.5 147.24H265.7M265.7 147.24H332.7M332.7 147.24H507.6M507.6 147.24H682.4M682.4 147.24H723.6M13.5 160.3H56.6M56.6 160.3H135.5M135.5 160.3H197.5M197.5 160.3H265.7M265.7 160.3H332.7M332.7 160.3H507.6M507.6 160.3H682.4M682.4 160.3H723.6M13.5 173.36H56.6M56.6 173.36H135.5M135.5 173.36H197.5M197.5 173.36H265.7M265.7 173.36H332.7M332.7 173.36H507.6M507.6 173.36H682.4M682.4 173.36H723.6M13.5 186.42H56.6M56.6 186.42H135.5M135.5 186.42H197.5M197.5 186.42H265.7M265.7 186.42H332.7M332.7 186.42H507.6M507.6 186.42H682.4M682.4 186.42H723.6M13.5 199.48H56.6M56.6 199.48H135.5M135.5 199.48H197.5M197.5 199.48H265.7M265.7 199.48H332.7M332.7 199.48H507.6M507.6 199.48H682.4M682.4 199.48H723.6M13.5 212.54H56.6M56.6 212.54H135.5M135.5 212.54H197.5M197.5 212.54H265.7M265.7 212.54H332.7M332.7 212.54H507.6M507.6 212.54H682.4M682.4 212.54H723.6M13.5 225.6H56.6M56.6 225.6H135.5M135.5 225.6H197.5M197.5 225.6H265.7M265.7 225.6H332.7M332.7 225.6H507.6M507.6 225.6H682.4M682.4 225.6H723.6M13.5 238.66H56.6M56.6 238.66H135.5M135.5 238.66H197.5M197.5 238.66H265.7M265.7 238.66H332.7M332.7 238.66H507.6M507.6 238.66H682.4M682.4 238.66H723.6M13.5 251.72H56.6M56.6 251.72H135.5M135.5 251.72H197.5M197.5 251.72H265.7M265.7 251.72H332.7M332.7 251.72H507.6M507.6 251.72H682.4M682.4 251.72H723.6M13.5 264.78H56.6M56.6 264.78H135.5M135.5 264.78H197.5M197.5 264.78H265.7M265.7 264.78H332.7M332.7 264.78H507.6M507.6 264.78H682.4M682.4 264.78H723.6M13.5 277.84H56.6M56.6 277.84H135.5M135.5 277.84H197.5M197.5 277.84H265.7M265.7 277.84H332.7M332.7 277.84H507.6M507.6 277.84H682.4M682.4 277.84H723.6M13.5 290.9H56.6M56.6 290.9H135.5M135.5 290.9H197.5M197.5 290.9H265.7M265.7 290.9H332.7M332.7 290.9H507.6M507.6 290.9H682.4M682.4 290.9H723.6M13.5 303.96H56.6M56.6 303.96H135.5M135.5 303.96H197.5M197.5 303.96H265.7M265.7 303.96H332.7M332.7 303.96H507.6M507.6 303.96H682.4M682.4 303.96H723.6M13.5 317.02H56.6M56.6 317.02H135.5M135.5 317.02H197.5M197.5 317.02H265.7M265.7 317.02H332.7M332.7 317.02H507.6M507.6 317.02H682.4M682.4 317.02H723.6M13.5 330.08H56.6M56.6 330.08H135.5M135.5 330.08H197.5M197.5 330.08H265.7M265.7 330.08H332.7M332.7 330.08H507.6M507.6 330.08H682.4M682.4 330.08H723.6M13.5 343.14H56.6M56.6 343.14H135.5M135.5 343.14H197.5M197.5 343.14H265.7M265.7 343.14H332.7M332.7 343.14H507.6M507.6 343.14H682.4M682.4 343.14H723.6M13.5 356.2H56.6M56.6 356.2H135.5M135.5 356.2H197.5M197.5 356.2H265.7M265.7 356.2H332.7M332.7 356.2H507.6M507.6 356.2H682.4M682.4 356.2H723.6M13.5 369.26H56.6M56.6 369.26H135.5M135.5 369.26H197.5M197.5 369.26H265.7M265.7 369.26H332.7M332.7 369.26H507.6M507.6 369.26H682.4M682.4 369.26H723.6M13.5 382.32H56.6M56.6 382.32H135.5M135.5 382.32H197.5M197.5 382.32H265.7M265.7 382.32H332.7M332.7 382.32H507.6M507.6 382.32H682.4M682.4 382.32H723.6M13.5 395.38H56.6M56.6 395.38H135.5M135.5 395.38H197.5M197.5 395.38H265.7M265.7 395.38H332.7M332.7 395.38H507.6M13.5 408.44H56.6M56.6 408.44H135.5M135.5 408.44H197.5M197.5 408.44H265.7M265.7 408.44H332.7M332.7 408.44H507.6M56.6 95.0V108.06M56.6 108.06V121.12M56.6 121.12V134.18M56.6 134.18V147.24M56.6 147.24V160.3M56.6 160.3V173.36M56.6 173.36V186.42M56.6 186.42V199.48M56.6 199.48V212.54M56.6 212.54V225.6M56.6 225.6V238.66M56.6 238.66V251.72M56.6 251.72V264.78M56.6 264.78V277.84M56.6 277.84V290.9M56.6 290.9V303.96M56.6 303.96V317.02M56.6 317.02V330.08M56.6 330.08V343.14M56.6 343.14V356.2M56.6 356.2V369.26M56.6 369.26V382.32M56.6 382.32V395.38M56.6 395.38V408.44M135.5 95.0V108.06M135.5 108.06V121.12M135.5 121.12V134.18M135.5 134.18V147.24M135.5 147.24V160.3M135.5 160.3V173.36M135.5 173.36V186.42M135.5 186.42V199.48M135.5 199.48V212.54M135.5 212.54V225.6M135.5 225.6V238.66M135.5 238.66V251.72M135.5 251.72V264.78M135.5 264.78V277.84M135.5 277.84V290.9M135.5 290.9V303.96M135.5 303.96V317.02M135.5 317.02V330.08M135.5 330.08V343.14M135.5 343.14V356.2M135.5 356.2V369.26M135.5 369.26V382.32M135.5 382.32V395.38M135.5 395.38V408.44M197.5 95.0V108.06M197.5 108.06V121.12M197.5 121.12V134.18M197.5 134.18V147.24M197.5 147.24V160.3M197.5 160.3V173.36M197.5 173.36V186.42M197.5 186.42V199.48M197.5 199.48V212.54M197.5 212.54V225.6M197.5 225.6V238.66M197.5 238.66V251.72M197.5 251.72V264.78M197.5 264.78V277.84M197.5 277.84V290.9M197.5 290.9V303.96M197.5 303.96V317.02M197.5 317.02V330.08M197.5 330.08V343.14M197.5 343.14V356.2M197.5 356.2V369.26M197.5 369.26V382.32M197.5 382.32V395.38M197.5 395.38V408.44M265.7 95.0V108.06M265.7 108.06V121.12M265.7 121.12V134.18M265.7 134.18V147.24M265.7 147.24V160.3M265.7 160.3V173.36M265.7 173.36V186.42M265.7 186.42V199.48M265.7 199.48V212.54M265.7 212.54V225.6M265.7 225.6V238.66M265.7 238.66V251.72M265.7 251.72V264.78M265.7 264.78V277.84M265.7 277.84V290.9M265.7 290.9V303.96M265.7 303.96V317.02M265.7 317.02V330.08M265.7 330.08V343.14M265.7 343.14V356.2M265.7 356.2V369.26M265.7 369.26V382.32M265.7 382.32V395.38M265.7 395.38V408.44M332.7 95.0V108.06M332.7 108.06V121.12M332.7 121.12V134.18M332.7 134.18V147.24M332.7 147.24V160.3M332.7 160.3V173.36M332.7 173.36V186.42M332.7 186.42V199.48M332.7 199.48V212.54M332.7 212.54V225.6M332.7 225.6V238.66M332.7 238.66V251.72M332.7 251.72V264.78M332.7 264.78V277.84M332.7 277.84V290.9M332.7 290.9V303.96M332.7 303.96V317.02M332.7 317.02V330.08M332.7 330.08V343.14M332.7 343.14V356.2M332.7 356.2V369.26M332.7 369.26V382.32M332.7 382.32V395.38M332.7 395.38V408.44M507.6 95.0V108.06M507.6 108.06V121.12M507.6 121.12V134.18M507.6 134.18V147.24M507.6 147.24V160.3M507.6 160.3V173.36M507.6 173.36V186.42M507.6 186.42V199.48M507.6 199.48V212.54M507.6 212.54V225.6M507.6 225.6V238.66M507.6 238.66V251.72M507.6 251.72V264.78M507.6 264.78V277.84M507.6 277.84V290.9M507.6 290.9V303.96M507.6 303.96V317.02M507.6 317.02V330.08M507.6 330.08V343.14M507.6 343.14V356.2M507.6 356.2V369.26M507.6 369.26V382.32M507.6 382.32V395.38M507.6 395.38V408.44M682.4 95.0V108.06M682.4 108.06V121.12M682.4 121.12V134.18M682.4 134.18V147.24M682.4 147.24V160.3M682.4 160.3V173.36M682.4 173.36V186.42M682.4 186.42V199.48M682.4 199.48V212.54M682.4 212.54V225.6M682.4 238.66V251.72M682.4 251.72V264.78M682.4 264.78V277.84M682.4 277.84V290.9M682.4 290.9V303.96M682.4 303.96V317.02M682.4 330.08V343.14M682.4 343.14V356.2M682.4 356.2V369.26M682.4 369.26V382.32M723.6 95.0V108.06M723.6 108.06V121.12M723.6 121.12V134.18M723.6 134.18V147.24M723.6 147.24V160.3M723.6 160.3V173.36M723.6 173.36V186.42M723.6 186.42V199.48M723.6 199.48V212.54M723.6 212.54V225.6M723.6 238.66V251.72M723.6 251.72V264.78M723.6 264.78V277.84M723.6 277.84V290.9M723.6 290.9V303.96M723.6 303.96V317.02M723.6 330.08V343.14M723.6 343.14V356.2M723.6 356.2V369.26M723.6 369.26V382.32" stroke="#484848" stroke-width="0.64" fill="none"/></svg>
<div class="a" style="left:508.0px;top:277.24px;width:173.99999999999994px;height:1.2px;background:#ef5f00"></div>
<div class="a" style="left:682.8px;top:277.24px;width:40.40000000000005px;height:1.2px;background:#b40000"></div>
<div class="a" style="left:508.0px;top:290.29999999999995px;width:173.99999999999994px;height:1.2px;background:#ef5f00"></div>
<div class="a" style="left:682.8px;top:290.29999999999995px;width:40.40000000000005px;height:1.2px;background:#b40000"></div>
<div class="cell" style="left:13.5px;top:101.1px;width:43.1px;height:6.9px"><div class="ct b" style="font-size:6.9px;color:#111;left:0;right:0;text-align:center;">Дата/мес</div></div>
<div class="cell" style="left:56.6px;top:101.1px;width:78.9px;height:6.9px"><div class="ct b" style="font-size:6.9px;color:#111;left:0;right:0;text-align:center;">Депозит (Micro)</div></div>
<div class="cell" style="left:135.5px;top:101.1px;width:62.0px;height:6.9px"><div class="ct b" style="font-size:6.9px;color:#111;left:0;right:0;text-align:center;">PNL (цель/факт)</div></div>
<div class="cell" style="left:197.5px;top:101.1px;width:68.19999999999999px;height:6.9px"><div class="ct b" style="font-size:6.9px;color:#111;left:0;right:0;text-align:center;">Депозит (Mini)</div></div>
<div class="cell" style="left:265.7px;top:101.1px;width:67.0px;height:6.9px"><div class="ct b" style="font-size:6.9px;color:#111;left:0;right:0;text-align:center;">PNL (цель/факт)</div></div>
<div class="cell" style="left:332.7px;top:101.1px;width:174.90000000000003px;height:6.9px"><div class="ct b" style="font-size:6.9px;color:#111;left:0;right:0;text-align:center;">Коммент</div></div>
<div class="cell" style="left:13.5px;top:114.1px;width:43.1px;height:6.45px"><div class="ct" style="font-size:6.45px;color:#222;left:0;right:0;text-align:center;">Декабрь</div></div>
<div class="cell" style="left:56.6px;top:114.1px;width:78.9px;height:6.45px"><div class="ct" style="font-size:6.45px;color:#222;right:1.3px;">$3 000,00</div></div>
<div class="cell" style="left:135.5px;top:114.1px;width:62.0px;height:6.45px"><div class="ct" style="font-size:6.45px;color:#222;right:1.3px;">$186,39</div></div>
<div class="cell" style="left:197.5px;top:114.1px;width:68.19999999999999px;height:6.45px"><div class="ct" style="font-size:6.45px;color:#222;right:1.3px;">$3 000,00</div></div>
<div class="cell" style="left:265.7px;top:114.1px;width:67.0px;height:6.45px"><div class="ct" style="font-size:6.45px;color:#222;right:1.3px;">$176,40</div></div>
<div class="cell" style="left:13.5px;top:127.1px;width:43.1px;height:6.45px"><div class="ct" style="font-size:6.45px;color:#222;right:1.3px;">02.12.2020</div></div>
<div class="cell" style="left:13.5px;top:140.1px;width:43.1px;height:6.45px"><div class="ct" style="font-size:6.45px;color:#222;right:1.3px;">03.12.2020</div></div>
<div class="cell" style="left:13.5px;top:153.1px;width:43.1px;height:6.45px"><div class="ct" style="font-size:6.45px;color:#222;right:1.3px;">04.12.2020</div></div>
<div class="cell" style="left:13.5px;top:166.1px;width:43.1px;height:6.45px"><div class="ct" style="font-size:6.45px;color:#222;right:1.3px;">07.12.2020</div></div>
<div class="cell" style="left:13.5px;top:179.1px;width:43.1px;height:6.45px"><div class="ct" style="font-size:6.45px;color:#222;right:1.3px;">08.12.2020</div></div>
<div class="cell" style="left:13.5px;top:192.1px;width:43.1px;height:6.45px"><div class="ct" style="font-size:6.45px;color:#222;right:1.3px;">09.12.2020</div></div>
<div class="cell" style="left:13.5px;top:205.1px;width:43.1px;height:6.45px"><div class="ct" style="font-size:6.45px;color:#222;right:1.3px;">10.12.2020</div></div>
<div class="cell" style="left:13.5px;top:218.1px;width:43.1px;height:6.45px"><div class="ct" style="font-size:6.45px;color:#222;right:1.3px;">11.12.2020</div></div>
<div class="cell" style="left:13.5px;top:231.1px;width:43.1px;height:6.45px"><div class="ct" style="font-size:6.45px;color:#222;right:1.3px;">14.12.2020</div></div>
<div class="cell" style="left:13.5px;top:245.1px;width:43.1px;height:6.45px"><div class="ct" style="font-size:6.45px;color:#222;right:1.3px;">15.12.2020</div></div>
<div class="cell" style="left:13.5px;top:258.1px;width:43.1px;height:6.45px"><div class="ct" style="font-size:6.45px;color:#222;right:1.3px;">16.12.2020</div></div>
<div class="cell" style="left:13.5px;top:271.1px;width:43.1px;height:6.45px"><div class="ct" style="font-size:6.45px;color:#222;right:1.3px;">17.12.2020</div></div>
<div class="cell" style="left:13.5px;top:284.1px;width:43.1px;height:6.45px"><div class="ct" style="font-size:6.45px;color:#222;right:1.3px;">18.12.2020</div></div>
<div class="cell" style="left:13.5px;top:297.1px;width:43.1px;height:6.45px"><div class="ct" style="font-size:6.45px;color:#222;right:1.3px;">21.12.2020</div></div>
<div class="cell" style="left:13.5px;top:310.1px;width:43.1px;height:6.45px"><div class="ct" style="font-size:6.45px;color:#222;right:1.3px;">22.12.2020</div></div>
<div class="cell" style="left:13.5px;top:323.1px;width:43.1px;height:6.45px"><div class="ct" style="font-size:6.45px;color:#222;right:1.3px;">23.12.2020</div></div>
<div class="cell" style="left:13.5px;top:336.1px;width:43.1px;height:6.45px"><div class="ct" style="font-size:6.45px;color:#222;right:1.3px;">24.12.2020</div></div>
<div class="cell" style="left:56.6px;top:127.1px;width:78.9px;height:6.45px"><div class="ct" style="font-size:6.45px;color:#222;right:1.3px;">$3 000,00</div></div>
<div class="cell" style="left:56.6px;top:140.1px;width:78.9px;height:6.45px"><div class="ct" style="font-size:6.45px;color:#222;right:1.3px;">$3 000,00</div></div>
<div class="cell" style="left:56.6px;top:153.1px;width:78.9px;height:6.45px"><div class="ct" style="font-size:6.45px;color:#222;right:1.3px;">$3 000,00</div></div>
<div class="cell" style="left:56.6px;top:166.1px;width:78.9px;height:6.45px"><div class="ct" style="font-size:6.45px;color:#222;right:1.3px;">$3 000,00</div></div>
<div class="cell" style="left:56.6px;top:179.1px;width:78.9px;height:6.45px"><div class="ct" style="font-size:6.45px;color:#222;right:1.3px;">$3 000,00</div></div>
<div class="cell" style="left:56.6px;top:192.1px;width:78.9px;height:6.45px"><div class="ct" style="font-size:6.45px;color:#222;right:1.3px;">$3 000,00</div></div>
<div class="cell" style="left:56.6px;top:205.1px;width:78.9px;height:6.45px"><div class="ct" style="font-size:6.45px;color:#222;right:1.3px;">$3 000,00</div></div>
<div class="cell" style="left:56.6px;top:218.1px;width:78.9px;height:6.45px"><div class="ct" style="font-size:6.45px;color:#222;right:1.3px;">$3 000,00</div></div>
<div class="cell" style="left:56.6px;top:231.1px;width:78.9px;height:6.45px"><div class="ct" style="font-size:6.45px;color:#222;right:1.3px;">$3 000,00</div></div>
<div class="cell" style="left:56.6px;top:245.1px;width:78.9px;height:6.45px"><div class="ct" style="font-size:6.45px;color:#222;right:1.3px;">$3 000,00</div></div>
<div class="cell" style="left:56.6px;top:258.1px;width:78.9px;height:6.45px"><div class="ct" style="font-size:6.45px;color:#222;right:1.3px;">$3 000,00</div></div>
<div class="cell" style="left:56.6px;top:271.1px;width:78.9px;height:6.45px"><div class="ct" style="font-size:6.45px;color:#222;right:1.3px;">$3 000,00</div></div>
<div class="cell" style="left:56.6px;top:284.1px;width:78.9px;height:6.45px"><div class="ct" style="font-size:6.45px;color:#222;right:1.3px;">$3 000,00</div></div>
<div class="cell" style="left:56.6px;top:297.1px;width:78.9px;height:6.45px"><div class="ct" style="font-size:6.45px;color:#222;right:1.3px;">$3 000,00</div></div>
<div class="cell" style="left:56.6px;top:310.1px;width:78.9px;height:6.45px"><div class="ct" style="font-size:6.45px;color:#222;right:1.3px;">$3 000,00</div></div>
<div class="cell" style="left:56.6px;top:323.1px;width:78.9px;height:6.45px"><div class="ct" style="font-size:6.45px;color:#222;right:1.3px;">$3 000,00</div></div>
<div class="cell" style="left:56.6px;top:336.1px;width:78.9px;height:6.45px"><div class="ct" style="font-size:6.45px;color:#222;right:1.3px;">$3 000,00</div></div>
<div class="cell" style="left:56.6px;top:349.1px;width:78.9px;height:6.45px"><div class="ct" style="font-size:6.45px;color:#222;right:1.3px;">$3 000,00</div></div>
<div class="cell" style="left:56.6px;top:362.1px;width:78.9px;height:6.45px"><div class="ct" style="font-size:6.45px;color:#222;right:1.3px;">$3 000,00</div></div>
<div class="cell" style="left:56.6px;top:375.1px;width:78.9px;height:6.45px"><div class="ct" style="font-size:6.45px;color:#222;right:1.3px;">$3 000,00</div></div>
<div class="cell" style="left:56.6px;top:388.1px;width:78.9px;height:6.45px"><div class="ct" style="font-size:6.45px;color:#222;right:1.3px;">$3 000,00</div></div>
<div class="cell" style="left:56.6px;top:401.1px;width:78.9px;height:6.45px"><div class="ct" style="font-size:6.45px;color:#222;right:1.3px;">$3 000,00</div></div>
<div class="cell" style="left:197.5px;top:127.1px;width:68.19999999999999px;height:6.45px"><div class="ct" style="font-size:6.45px;color:#222;right:1.3px;">$3 228,30</div></div>
<div class="cell" style="left:197.5px;top:140.1px;width:68.19999999999999px;height:6.45px"><div class="ct" style="font-size:6.45px;color:#222;right:1.3px;">$2 887,60</div></div>
<div class="cell" style="left:197.5px;top:153.1px;width:68.19999999999999px;height:6.45px"><div class="ct" style="font-size:6.45px;color:#222;right:1.3px;">$2 991,80</div></div>
<div class="cell" style="left:197.5px;top:166.1px;width:68.19999999999999px;height:6.45px"><div class="ct" style="font-size:6.45px;color:#222;right:1.3px;">$3 300,20</div></div>
<div class="cell" style="left:197.5px;top:179.1px;width:68.19999999999999px;height:6.45px"><div class="ct" style="font-size:6.45px;color:#222;right:1.3px;">$3 600,30</div></div>
<div class="cell" style="left:197.5px;top:192.1px;width:68.19999999999999px;height:6.45px"><div class="ct" style="font-size:6.45px;color:#222;right:1.3px;">$3 901,30</div></div>
<div class="cell" style="left:197.5px;top:205.1px;width:68.19999999999999px;height:6.45px"><div class="ct" style="font-size:6.45px;color:#222;right:1.3px;">$4 230,60</div></div>
<div class="cell" style="left:197.5px;top:218.1px;width:68.19999999999999px;height:6.45px"><div class="ct" style="font-size:6.45px;color:#222;right:1.3px;">$4 540,40</div></div>
<div class="cell" style="left:197.5px;top:231.1px;width:68.19999999999999px;height:6.45px"><div class="ct" style="font-size:6.45px;color:#222;right:1.3px;">$4 967,80</div></div>
<div class="cell" style="left:197.5px;top:245.1px;width:68.19999999999999px;height:6.45px"><div class="ct" style="font-size:6.45px;color:#222;right:1.3px;">$5 435,50</div></div>
<div class="cell" style="left:197.5px;top:258.1px;width:68.19999999999999px;height:6.45px"><div class="ct" style="font-size:6.45px;color:#222;right:1.3px;">$5 877,70</div></div>
<div class="cell" style="left:197.5px;top:271.1px;width:68.19999999999999px;height:6.45px"><div class="ct" style="font-size:6.45px;color:#222;right:1.3px;">$6 526,00</div></div>
<div class="cell" style="left:197.5px;top:284.1px;width:68.19999999999999px;height:6.45px"><div class="ct" style="font-size:6.45px;color:#222;right:1.3px;">$7 005,80</div></div>
<div class="cell" style="left:197.5px;top:297.1px;width:68.19999999999999px;height:6.45px"><div class="ct" style="font-size:6.45px;color:#222;right:1.3px;">$7 413,70</div></div>
<div class="cell" style="left:197.5px;top:310.1px;width:68.19999999999999px;height:6.45px"><div class="ct" style="font-size:6.45px;color:#222;right:1.3px;">$7 913,85</div></div>
<div class="cell" style="left:197.5px;top:323.1px;width:68.19999999999999px;height:6.45px"><div class="ct" style="font-size:6.45px;color:#222;right:1.3px;">$8 129,65</div></div>
<div class="cell" style="left:197.5px;top:336.1px;width:68.19999999999999px;height:6.45px"><div class="ct" style="font-size:6.45px;color:#222;right:1.3px;">$8 170,05</div></div>
<div class="cell" style="left:197.5px;top:349.1px;width:68.19999999999999px;height:6.45px"><div class="ct" style="font-size:6.45px;color:#222;right:1.3px;">$8 170,05</div></div>
<div class="cell" style="left:197.5px;top:362.1px;width:68.19999999999999px;height:6.45px"><div class="ct" style="font-size:6.45px;color:#222;right:1.3px;">$8 170,05</div></div>
<div class="cell" style="left:197.5px;top:375.1px;width:68.19999999999999px;height:6.45px"><div class="ct" style="font-size:6.45px;color:#222;right:1.3px;">$8 170,05</div></div>
<div class="cell" style="left:197.5px;top:388.1px;width:68.19999999999999px;height:6.45px"><div class="ct" style="font-size:6.45px;color:#222;right:1.3px;">$8 170,05</div></div>
<div class="cell" style="left:197.5px;top:401.1px;width:68.19999999999999px;height:6.45px"><div class="ct" style="font-size:6.45px;color:#222;right:1.3px;">$8 170,05</div></div>
<div class="cell" style="left:265.7px;top:127.1px;width:67.0px;height:6.45px"><div class="ct" style="font-size:6.45px;color:#222;right:1.3px;">$228,30</div></div>
<div class="cell" style="left:265.7px;top:140.1px;width:67.0px;height:6.45px"><div class="ct" style="font-size:6.45px;color:#222;right:1.3px;">-$340,70</div></div>
<div class="cell" style="left:265.7px;top:153.1px;width:67.0px;height:6.45px"><div class="ct" style="font-size:6.45px;color:#222;right:1.3px;">$104,20</div></div>
<div class="cell" style="left:265.7px;top:166.1px;width:67.0px;height:6.45px"><div class="ct" style="font-size:6.45px;color:#222;right:1.3px;">$308,40</div></div>
<div class="cell" style="left:265.7px;top:179.1px;width:67.0px;height:6.45px"><div class="ct" style="font-size:6.45px;color:#222;right:1.3px;">$300,10</div></div>
<div class="cell" style="left:265.7px;top:192.1px;width:67.0px;height:6.45px"><div class="ct" style="font-size:6.45px;color:#222;right:1.3px;">$301,00</div></div>
<div class="cell" style="left:265.7px;top:205.1px;width:67.0px;height:6.45px"><div class="ct" style="font-size:6.45px;color:#222;right:1.3px;">$329,30</div></div>
<div class="cell" style="left:265.7px;top:218.1px;width:67.0px;height:6.45px"><div class="ct" style="font-size:6.45px;color:#222;right:1.3px;">$309,80</div></div>
<div class="cell" style="left:265.7px;top:231.1px;width:67.0px;height:6.45px"><div class="ct" style="font-size:6.45px;color:#222;right:1.3px;">$427,40</div></div>
<div class="cell" style="left:265.7px;top:245.1px;width:67.0px;height:6.45px"><div class="ct" style="font-size:6.45px;color:#222;right:1.3px;">$467,70</div></div>
<div class="cell" style="left:265.7px;top:258.1px;width:67.0px;height:6.45px"><div class="ct" style="font-size:6.45px;color:#222;right:1.3px;">$442,20</div></div>
<div class="cell" style="left:265.7px;top:271.1px;width:67.0px;height:6.45px"><div class="ct" style="font-size:6.45px;color:#222;right:1.3px;">$648,30</div></div>
<div class="cell" style="left:265.7px;top:284.1px;width:67.0px;height:6.45px"><div class="ct" style="font-size:6.45px;color:#222;right:1.3px;">$479,80</div></div>
<div class="cell" style="left:265.7px;top:297.1px;width:67.0px;height:6.45px"><div class="ct" style="font-size:6.45px;color:#222;right:1.3px;">$407,90</div></div>
<div class="cell" style="left:265.7px;top:310.1px;width:67.0px;height:6.45px"><div class="ct" style="font-size:6.45px;color:#222;right:1.3px;">$500,15</div></div>
<div class="cell" style="left:265.7px;top:323.1px;width:67.0px;height:6.45px"><div class="ct" style="font-size:6.45px;color:#222;right:1.3px;">$215,80</div></div>
<div class="cell" style="left:265.7px;top:336.1px;width:67.0px;height:6.45px"><div class="ct" style="font-size:6.45px;color:#222;right:1.3px;">$40,40</div></div>
<div class="cell" style="left:507.6px;top:101.1px;width:174.79999999999995px;height:6.9px"><div class="ct b" style="font-size:6.9px;color:#111;left:1.6px;">1 тик микро =</div></div>
<div class="cell" style="left:507.6px;top:113.1px;width:174.79999999999995px;height:7.4px"><div class="ct" style="font-size:7.4px;color:#111;left:1.6px;">Комиссия =</div></div>
<div class="cell" style="left:507.6px;top:126.1px;width:174.79999999999995px;height:7.4px"><div class="ct" style="font-size:7.4px;color:#111;left:1.6px;">Объем  Lot =</div></div>
<div class="cell" style="left:507.6px;top:139.1px;width:174.79999999999995px;height:7.4px"><div class="ct" style="font-size:7.4px;color:#111;left:1.6px;">Средння сделка ТИК</div></div>
<div class="cell" style="left:507.6px;top:152.1px;width:174.79999999999995px;height:7.4px"><div class="ct" style="font-size:7.4px;color:#111;left:1.6px;">Кол. Приб.Сделок</div></div>
<div class="cell" style="left:507.6px;top:166.1px;width:174.79999999999995px;height:6.9px"><div class="ct b" style="font-size:6.9px;color:#111;left:1.6px;">1 тик мини =</div></div>
<div class="cell" style="left:507.6px;top:178.1px;width:174.79999999999995px;height:7.4px"><div class="ct" style="font-size:7.4px;color:#111;left:1.6px;">Комиссия =</div></div>
<div class="cell" style="left:507.6px;top:191.1px;width:174.79999999999995px;height:7.4px"><div class="ct" style="font-size:7.4px;color:#111;left:1.6px;">Объем  Lot =</div></div>
<div class="cell" style="left:507.6px;top:204.1px;width:174.79999999999995px;height:7.4px"><div class="ct" style="font-size:7.4px;color:#111;left:1.6px;">Средння сделка ТИК</div></div>
<div class="cell" style="left:507.6px;top:217.1px;width:174.79999999999995px;height:7.4px"><div class="ct" style="font-size:7.4px;color:#111;left:1.6px;">Кол. Приб. Сделок</div></div>
<div class="cell" style="left:507.6px;top:245.1px;width:174.79999999999995px;height:6.9px"><div class="ct b" style="font-size:6.9px;color:#111;left:1.6px;">Результат Микро =</div></div>
<div class="cell" style="left:507.6px;top:258.1px;width:174.79999999999995px;height:6.9px"><div class="ct b" style="font-size:6.9px;color:#111;left:1.6px;">Результат Мини =</div></div>
<div class="cell" style="left:507.6px;top:271.1px;width:174.79999999999995px;height:6.9px"><div class="ct b" style="font-size:6.9px;color:#111;letter-spacing:0;color:#451200;left:1.6px;">STOP MAX DAY (micro)</div></div>
<div class="cell" style="left:507.6px;top:284.1px;width:174.79999999999995px;height:6.9px"><div class="ct b" style="font-size:6.9px;color:#111;letter-spacing:0;color:#451200;left:1.6px;">STOP MAX DAY (mini)</div></div>
<div class="cell" style="left:507.6px;top:297.1px;width:174.79999999999995px;height:6.9px"><div class="ct b" style="font-size:6.9px;color:#111;letter-spacing:0;color:#451200;left:1.6px;">STOP MAX ORDER</div></div>
<div class="cell" style="left:507.6px;top:336.1px;width:174.79999999999995px;height:6.9px"><div class="ct b" style="font-size:6.9px;color:#111;left:1.6px;">Мин. депо на 1 (Micro lot)</div></div>
<div class="cell" style="left:507.6px;top:349.1px;width:174.79999999999995px;height:6.9px"><div class="ct b" style="font-size:6.9px;color:#111;left:1.6px;">Цель в месяц (%/cash)</div></div>
<div class="cell" style="left:507.6px;top:362.1px;width:174.79999999999995px;height:6.9px"><div class="ct b" style="font-size:6.9px;color:#111;left:1.6px;">Мин. депо на 1 (Mini lot)</div></div>
<div class="cell" style="left:507.6px;top:375.1px;width:174.79999999999995px;height:6.9px"><div class="ct b" style="font-size:6.9px;color:#111;left:1.6px;">Цель в месяц (%/cash)</div></div>
<div class="cell" style="left:682.4px;top:100.1px;width:41.200000000000045px;height:7.0px"><div class="ct" style="font-size:7.0px;color:#222;right:2.1px;">$1,25</div></div>
<div class="cell" style="left:682.4px;top:113.1px;width:41.200000000000045px;height:7.0px"><div class="ct" style="font-size:7.0px;color:#222;right:2.1px;">$0,37</div></div>
<div class="cell" style="left:682.4px;top:126.1px;width:41.200000000000045px;height:7.3px"><div class="ct b" style="font-size:7.3px;color:#fff;right:2.1px;">10,0</div></div>
<div class="cell" style="left:682.4px;top:139.1px;width:41.200000000000045px;height:7.0px"><div class="ct" style="font-size:7.0px;color:#222;right:2.1px;">5</div></div>
<div class="cell" style="left:682.4px;top:152.1px;width:41.200000000000045px;height:7.0px"><div class="ct" style="font-size:7.0px;color:#222;right:2.1px;">3</div></div>
<div class="cell" style="left:682.4px;top:165.1px;width:41.200000000000045px;height:7.0px"><div class="ct" style="font-size:7.0px;color:#222;right:2.1px;">$12,50</div></div>
<div class="cell" style="left:682.4px;top:178.1px;width:41.200000000000045px;height:7.0px"><div class="ct" style="font-size:7.0px;color:#222;right:2.1px;">$3,70</div></div>
<div class="cell" style="left:682.4px;top:191.1px;width:41.200000000000045px;height:7.3px"><div class="ct b" style="font-size:7.3px;color:#fff;right:2.1px;">1,0</div></div>
<div class="cell" style="left:682.4px;top:204.1px;width:41.200000000000045px;height:7.0px"><div class="ct" style="font-size:7.0px;color:#222;right:2.1px;">5</div></div>
<div class="cell" style="left:682.4px;top:217.1px;width:41.200000000000045px;height:7.0px"><div class="ct" style="font-size:7.0px;color:#222;right:2.1px;">3</div></div>
<div class="cell" style="left:682.4px;top:245.1px;width:41.200000000000045px;height:6.45px"><div class="ct" style="font-size:6.45px;color:#444;right:2.1px;">$0,00</div></div>
<div class="cell" style="left:682.4px;top:258.1px;width:41.200000000000045px;height:6.45px"><div class="ct" style="font-size:6.45px;color:#444;right:2.1px;">$5 170,05</div></div>
<div class="cell" style="left:682.4px;top:271.1px;width:41.200000000000045px;height:6.9px"><div class="ct b" style="font-size:6.9px;color:#fff;right:2.1px;">$372,78</div></div>
<div class="cell" style="left:682.4px;top:284.1px;width:41.200000000000045px;height:6.9px"><div class="ct b" style="font-size:6.9px;color:#fff;right:2.1px;">$352,80</div></div>
<div class="cell" style="left:682.4px;top:297.1px;width:41.200000000000045px;height:6.9px"><div class="ct b" style="font-size:6.9px;color:#fff;right:2.1px;">10</div></div>
<div class="cell" style="left:682.4px;top:336.1px;width:41.200000000000045px;height:6.45px"><div class="ct" style="font-size:6.45px;color:#444;right:2.1px;">$300,00</div></div>
<div class="cell" style="left:682.4px;top:349.1px;width:41.200000000000045px;height:6.45px"><div class="ct" style="font-size:6.45px;color:#444;margin-right:-0.8px;right:2.1px;">136,69</div></div>
<div class="cell" style="left:682.4px;top:362.1px;width:41.200000000000045px;height:6.45px"><div class="ct" style="font-size:6.45px;color:#444;right:2.1px;">$3 000,00</div></div>
<div class="cell" style="left:682.4px;top:375.1px;width:41.200000000000045px;height:6.45px"><div class="ct" style="font-size:6.45px;color:#444;margin-right:-0.8px;right:2.1px;">129,36</div></div>
<div class="cell" style="left:723.6px;top:127.1px;width:76.0px;height:6.45px"><div class="ct" style="font-size:6.45px;color:#222;margin-left:-0.4px;left:1.6px;"><< Объем для сделки</div></div>
<div class="cell" style="left:723.6px;top:192.1px;width:76.0px;height:6.45px"><div class="ct" style="font-size:6.45px;color:#222;margin-left:-0.4px;left:1.6px;"><< Объем для сделки</div></div>
<div class="cell" style="left:723.6px;top:349.1px;width:76.0px;height:6.9px"><div class="ct b" style="font-size:6.9px;color:#111;margin-left:-0.4px;transform:scaleX(0.89);transform-origin:0 0;left:1.6px;">$4 100,58</div></div>
<div class="cell" style="left:723.6px;top:375.1px;width:76.0px;height:6.9px"><div class="ct b" style="font-size:6.9px;color:#111;margin-left:-0.4px;transform:scaleX(0.89);transform-origin:0 0;left:1.6px;">$3 880,80</div></div>
<div class="a" style="left:265.0px;top:342.44px;width:68.4px;height:14.460000000000003px;border:1.1px solid #3a875b"></div>
<div class="a" style="left:331.5px;top:355.0px;width:2.4px;height:2.4px;background:#2b7a4e"></div>
</body></html>
